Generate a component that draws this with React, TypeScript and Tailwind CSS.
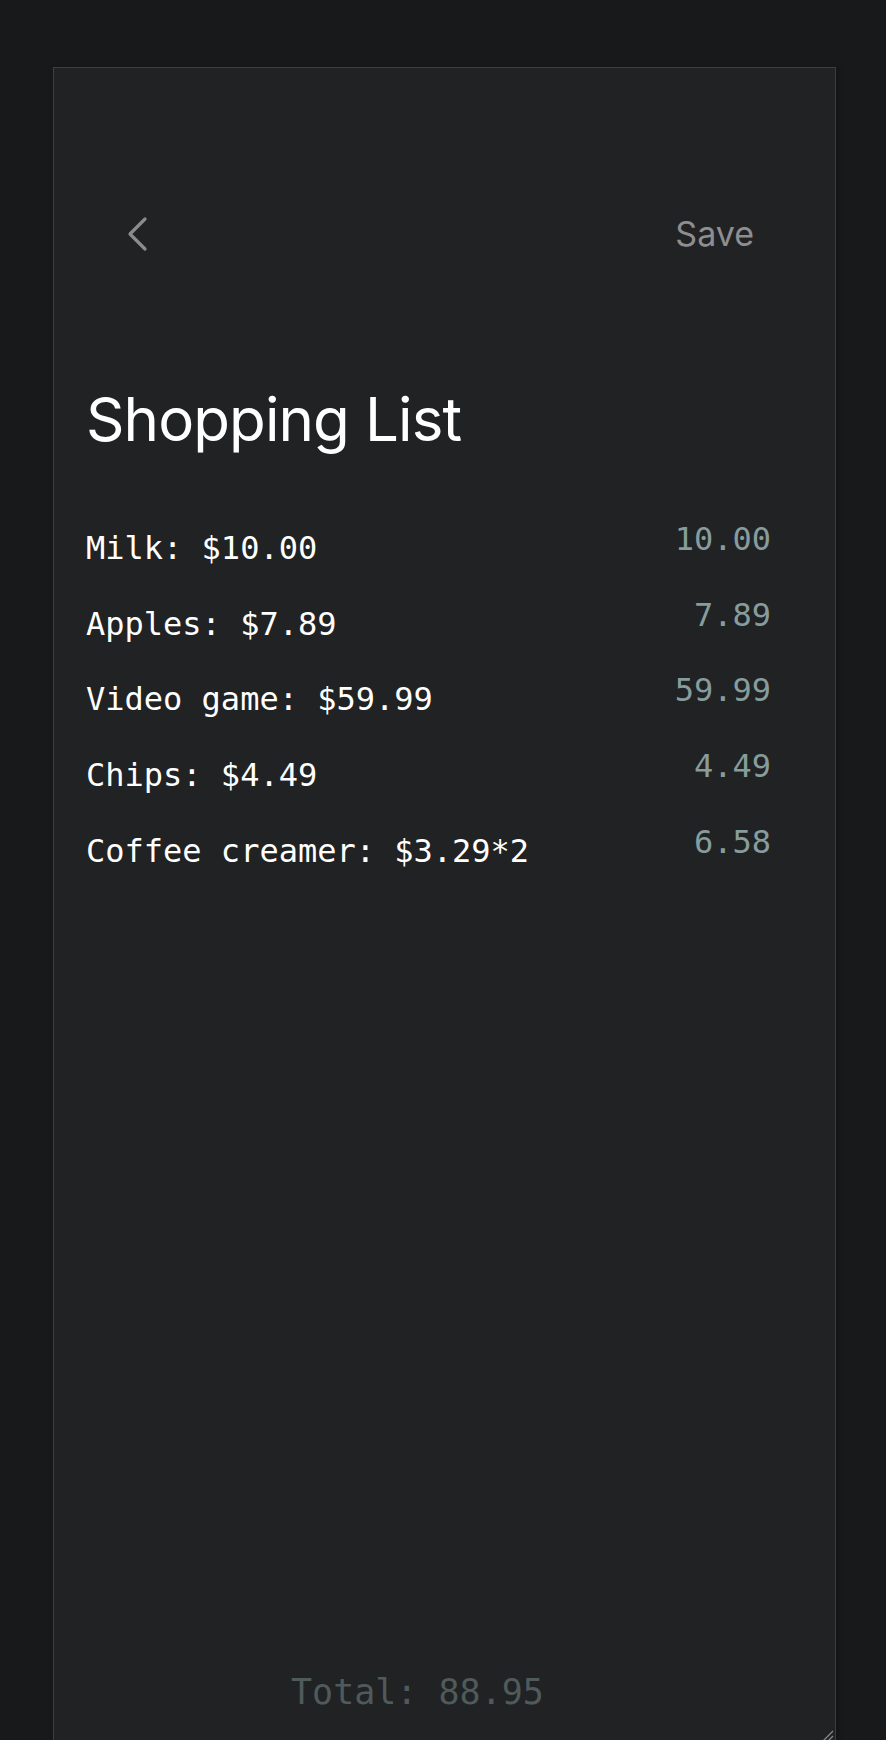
const items = [
  { text: "Milk: $10.00", value: "10.00" },
  { text: "Apples: $7.89", value: "7.89" },
  { text: "Video game: $59.99", value: "59.99" },
  { text: "Chips: $4.49", value: "4.49" },
  { text: "Coffee creamer: $3.29*2", value: "6.58" },
];

const mono = "font-['DejaVu_Sans_Mono',monospace]";

const App = () => {
  return (
    <div className="min-h-screen bg-[#18191b] pt-[67px] pl-[53px] pr-[50px] overflow-hidden">
      <div className="relative h-[1677px] border border-[#3e3f42] bg-[#212224] shadow-[2px_0_6px_rgba(0,0,0,0.25)] flex flex-col">
        {/* top bar */}
        <div className="mt-[138px] h-[56px] flex items-center justify-between pl-[73px] pr-[81px]">
          <svg width="21" height="36" viewBox="0 0 21 36" fill="none">
            <path
              d="M18 3 L3 18 L18 33"
              stroke="#8b8b8d"
              strokeWidth="3.2"
              strokeLinecap="round"
              strokeLinejoin="round"
            />
          </svg>
          <span className="font-['Inter',sans-serif] text-[34px] leading-none text-[#8e8e90]">
            Save
          </span>
        </div>

        <h1 className="mt-[127px] pl-[32px] font-['Inter',sans-serif] text-[60px] leading-none text-white tracking-[-0.9px]">
          Shopping List
        </h1>

        <div className="mt-[74px] pl-[32px] pr-[64px]">
          {items.map((item) => (
            <div key={item.text} className="flex justify-between h-[75.7px]">
              <span className={`${mono} mt-[9px] text-[32px] leading-none text-white`}>
                {item.text}
              </span>
              <span className={`${mono} text-[32px] leading-none text-[#879c9c]`}>
                {item.value}
              </span>
            </div>
          ))}
        </div>

        <div className="mt-auto mb-[33px] pl-[237px]">
          <span className={`${mono} text-[35px] leading-none text-[#4f5a5b]`}>
            Total: 88.95
          </span>
        </div>

        <svg
          className="absolute right-[1px] bottom-[1px]"
          width="14"
          height="14"
          viewBox="0 0 14 14"
        >
          <path d="M13 3 L3 13 M13 8 L8 13" stroke="#8a8a8c" strokeWidth="1.2" />
        </svg>
      </div>
    </div>
  );
};

export default App;
